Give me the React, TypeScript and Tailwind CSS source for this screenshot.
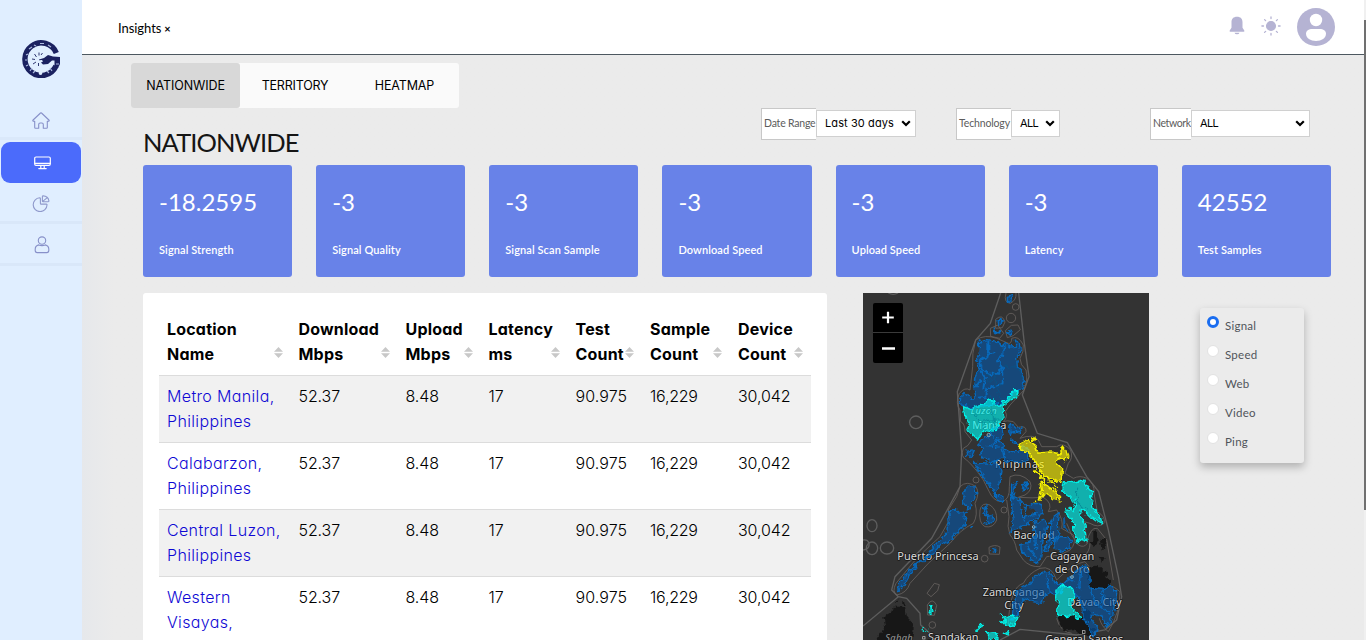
import React from "react";

const inter = "font-['Inter','Noto_Sans',sans-serif] [font-feature-settings:'cv11']";
const lato = "font-['Lato','Open_Sans',sans-serif]";

function Logo() {
  return (
    <svg width="38" height="38" viewBox="0 0 38 38">
      <path d="M34.300 13A16.300 16.300 0 1 0 34 26" fill="none" stroke="#1b2160" strokeWidth="5.400" />
      <path d="M32.500 20H38v4l-2 4-3.500-2z" fill="#1b2160" />
      <path
        d="M7 9l3-2M12 5l2 1M18 3.500h4M26 5l3 2M4 15l2-1M3 20h2M4 26l2-1M8 31l2-3M11 33l2-2M27 33l-2-2M30 31l-2-3M34 24h3"
        stroke="#aebbe0"
        strokeWidth="1.200"
      />
      <circle cx="18.500" cy="33" r="1.900" fill="#e0eeff" />
      <path d="M17 19.500l5-1.500 4-3 5 1.500 7 .5v3.500h-8l-4 3.500-5 .5-2-2 2-1-1-1.500-3 .3z" fill="#1b2160" />
      <path d="M14.500 17l-2-3M17 15.500v-3M13 19.500l-3-.5M14 22l-3 2M16.500 23v3M19 15l1.500-2" stroke="#1b2160" strokeWidth=".9" />
    </svg>
  );
}

function HomeIcon() {
  return (
    <svg width="18" height="17" viewBox="0 0 18 17" fill="none" stroke="#8790c9" strokeWidth="1.100" strokeLinejoin="round" strokeLinecap="round">
      <path d="M2.700 9.300H1.300q-.9-.6-.2-1.300L8.500 1q.5-.4 1 0l7.400 7q.7.700-.2 1.300h-1.400v6.100q0 .8-.8.800h-3.200v-3.700q0-1.500-1.500-1.500H8.200q-1.500 0-1.500 1.500v3.700H3.500q-.8 0-.8-.8z" />
    </svg>
  );
}

function MonitorIcon() {
  return (
    <svg width="17" height="14" viewBox="0 0 17 14" fill="none" stroke="#fff" strokeWidth="1.200" strokeLinecap="round">
      <rect x=".7" y="1" width="15.600" height="8.400" rx="1.300" />
      <path d="M1 7.400h15M6.800 9.600v2.600M10.200 9.600v2.600M4.800 12.600h7.400" />
    </svg>
  );
}

function PieIcon() {
  return (
    <svg width="18" height="17" viewBox="0 0 18 17" fill="none" stroke="#8f99cc" strokeWidth="1.100" strokeLinejoin="round">
      <path d="M7.700 2.800q.7 0 .7.700v4.900q0 .7.700.7h5.300q.7 0 .6.800A6.900 6.900 0 1 1 7.700 2.800z" />
      <path d="M11.100.9q-.7 0-.7.700v4.300q0 .8.800.8h5q.8 0 .7-.8A6 6 0 0 0 11.100.9zM10.700 6.400L15 2.900" />
    </svg>
  );
}

function UserIcon() {
  return (
    <svg width="16" height="18" viewBox="0 0 16 18" fill="none" stroke="#8790c9" strokeWidth="1.100">
      <circle cx="8" cy="4.600" r="3.700" />
      <path d="M4.800 8.900q3.200 1.400 6.400 0 3.600.9 3.600 4.300v1.400q0 2-2 2H3.200q-2 0-2-2v-1.400q0-3.400 3.600-4.300z" />
    </svg>
  );
}

function Sidebar() {
  return (
    <aside className="flex h-full w-[82px] shrink-0 flex-col items-center bg-[#e0eeff] pt-10">
      <Logo />
      <nav className="mt-[22px] flex w-full flex-col">
        <div className="flex h-[40px] items-center justify-center border-b-3 border-[#dae8fa] pt-[3px]"><HomeIcon /></div>
        <div className="mx-px mt-[2px] flex h-[41px] items-center justify-center rounded-[9px] bg-[#4b6bfb] pl-[2px]"><MonitorIcon /></div>
        <div className="flex h-[41px] items-center justify-center border-b-3 border-[#d9e7f9] pt-[3px]"><PieIcon /></div>
        <div className="flex h-[42px] items-center justify-center border-b-3 border-[#d9e7f9] pt-[3px] pl-px"><UserIcon /></div>
      </nav>
    </aside>
  );
}

function Header() {
  return (
    <header className="flex h-[55px] shrink-0 items-center justify-between border-b border-[#4d5860] bg-white pr-[29px] pl-9">
      <div className={`${lato} flex items-baseline gap-[3px] pt-[3px] text-[13px] tracking-[-0.050px] text-black`}>
        <span>Insights</span>
        <span className="text-[11px] font-bold">×</span>
      </div>
      <div className="flex items-center">
        <svg width="16" height="19" viewBox="0 0 16 19" fill="#b5b3d3" className="mb-[3px]">
          <path d="M8 .8c-3.700 0-5.500 2.200-5.500 5.500v5.500L.7 14.500q-.5 1.200.7 1.200h13.200q1.200 0 .7-1.200l-1.800-2.700V6.300C13.500 3 11.700.8 8 .8zM5.500 16.700h5Q10 18.300 8 18.300t-2.500-1.600z" />
        </svg>
        <svg width="20" height="20" viewBox="0 0 20 20" className="mb-[3px] ml-4" stroke="#b5b3d3" strokeWidth="1.300" strokeLinecap="round">
          <circle cx="10" cy="10" r="4.400" fill="#b5b3d3" />
          <path d="M10 .9v1.600M10 17.500v1.600M.9 10h1.600M17.500 10h1.600M3.600 3.600l1 1M15.400 15.400l1 1M3.600 16.400l1-1M15.400 4.600l1-1" />
        </svg>
        <svg width="38" height="38" viewBox="0 0 38 38" className="ml-4">
          <circle cx="19" cy="19" r="19" fill="#b5b3d3" />
          <circle cx="19" cy="12" r="6.200" fill="#fff" />
          <path d="M15.500 21h7c4 0 6.500 2 6.500 4.800C29 30 24.500 33 19 33S9 30 9 25.800C9 23 11.500 21 15.500 21z" fill="#fff" />
        </svg>
      </div>
    </header>
  );
}

function Tabs() {
  return (
    <div className={`${inter} flex h-[45px] w-[328px] rounded-[3px] bg-[#fafafa] pt-px text-[12.500px] text-black`}>
      <div className="-mt-px flex w-[109px] items-center justify-center rounded-[3px] bg-[#d8d8d8] pt-px tracking-[-0.1px]">NATIONWIDE</div>
      <div className="flex w-[110px] items-center justify-center tracking-[-0.2px]">TERRITORY</div>
      <div className="flex w-[109px] items-center justify-center tracking-[-0.15px]">HEATMAP</div>
    </div>
  );
}

function Chevron() {
  return (
    <svg width="10" height="7" viewBox="0 0 10 7" fill="none" stroke="#000" strokeWidth="2.200">
      <path d="M1.200 1.200L5 5l3.800-3.800" />
    </svg>
  );
}

type FilterProps = { label: string; value: string; labelClass: string; selectClass: string; valueClass: string };

function Filter({ label, value, labelClass, selectClass, valueClass }: FilterProps) {
  return (
    <div className="flex items-start">
      <div className={`${lato} flex h-8 items-center border border-r-0 border-[#c8c8c8] bg-white pl-[2px] text-[10.500px] whitespace-nowrap text-[#5c5c5c] ${labelClass}`}>
        {label}
      </div>
      <div className={`${inter} mt-[2px] flex h-[27px] items-center justify-between border border-[#d0d0d0] bg-white pr-[4px] pl-2 text-[11px] text-black ${selectClass}`}>
        <span className={`whitespace-nowrap ${valueClass}`}>{value}</span>
        <Chevron />
      </div>
    </div>
  );
}

const stats = [
  ["-18.2595", "Signal Strength"],
  ["-3", "Signal Quality"],
  ["-3", "Signal Scan Sample"],
  ["-3", "Download Speed"],
  ["-3", "Upload Speed"],
  ["-3", "Latency"],
  ["42552", "Test Samples"],
];

function Stats() {
  return (
    <div className={`${lato} grid w-[1188px] grid-cols-7 gap-6`}>
      {stats.map(([value, label]) => (
        <div key={label} className="flex h-28 flex-col rounded-[3px] bg-[#6882e8] pt-[21px] pl-4 text-white">
          <div className="text-[24px] leading-8">{value}</div>
          <div className="mt-[24px] text-[11px] leading-[15px] font-semibold tracking-[0.100px] whitespace-nowrap">{label}</div>
        </div>
      ))}
    </div>
  );
}

const columns = [
  ["Location", "Name"],
  ["Download", "Mbps"],
  ["Upload", "Mbps"],
  ["Latency", "ms"],
  ["Test", "Count"],
  ["Sample", "Count"],
  ["Device", "Count"],
];

const places = [
  ["Metro Manila,", "Philippines"],
  ["Calabarzon,", "Philippines"],
  ["Central Luzon,", "Philippines"],
  ["Western", "Visayas,"],
];

const rowGrid = "grid grid-cols-[131.500px_107px_83px_87px_74.500px_88px_81px]";

function LocationTable() {
  return (
    <div className={`${inter} h-[420px] w-[684px] shrink-0 rounded-[3px] bg-white px-4 pt-4 text-[16px] leading-[25px] text-black`}>
      <div className={`${rowGrid} h-[67px] border-b border-[#dcdcdc] pt-2`}>
        {columns.map(([top, bottom], i) => (
          <div key={i} className="flex items-end justify-between pr-[8px] pb-[8px] pl-2 font-bold whitespace-nowrap">
            <div className="w-0 tracking-[0.200px]">
              {top}
              <br />
              {bottom}
            </div>
            <svg width="9" height="11" viewBox="0 0 9 11" fill="#c8c8c8" className="mb-[9px]">
              <path d="M0 4.800L4.500 0 9 4.800zM0 6.200L4.500 11 9 6.200z" />
            </svg>
          </div>
        ))}
      </div>
      {places.map(([top, bottom], i) => (
        <div key={top} className={`${rowGrid} h-[67px] border-b border-[#dcdcdc] pt-2 font-light tracking-[-0.100px] ${i % 2 === 0 ? "bg-[#f1f1f1]" : "bg-white"}`}>
          <div className="pl-2 tracking-[0.350px] whitespace-nowrap text-[#0f08d4]">
            {top}
            <br />
            {bottom}
          </div>
          <div className="pl-2">52.37</div>
          <div className="pl-2">8.48</div>
          <div className="pl-2">17</div>
          <div className="pl-2 tracking-[0.100px]">90.975</div>
          <div className="pl-2 tracking-[-0.250px]">16,229</div>
          <div className="pl-2">30,042</div>
        </div>
      ))}
    </div>
  );
}

function MapLabels() {
  return (
    <g
      fontFamily="Noto Sans, sans-serif"
      fontSize="33"
      fill="#dadada"
      stroke="#181818"
      strokeWidth="5"
      strokeLinejoin="round"
      paintOrder="stroke"
    >
      <text x="332" y="373" fontSize="28" fontStyle="italic" textLength="78">Luzon</text>
      <text x="337" y="417" textLength="102">Manila</text>
      <text x="405" y="534" textLength="148">Pilipinas</text>
      <text x="460" y="747" textLength="124">Bacolod</text>
      <text x="112" y="810" textLength="244">Puerto Princesa</text>
      <text x="570" y="810" textLength="133">Cagayan</text>
      <text x="584" y="850" textLength="105">de Oro</text>
      <text x="368" y="918" textLength="186">Zamboanga</text>
      <text x="433" y="957" textLength="58">City</text>
      <text x="622" y="948" textLength="163">Davao City</text>
      <text x="204" y="1054" textLength="152">Sandakan</text>
      <text x="556" y="1060" textLength="234">General Santos</text>
      <text x="76" y="1052" fontSize="28" fontStyle="italic" fill="#999" textLength="82">Sabah</text>
    </g>
  );
}

function MapDrawing() {
  return (
    <svg width="286" height="347" viewBox="9 9 858 1041" className="block">
      <defs>
        <filter id="coast" x="-5%" y="-5%" width="110%" height="110%" colorInterpolationFilters="sRGB">
          <feTurbulence type="fractalNoise" baseFrequency="0.07" numOctaves="2" seed="4" result="n" />
          <feDisplacementMap in="SourceGraphic" in2="n" scale="20" xChannelSelector="R" yChannelSelector="G" />
        </filter>
      </defs>
      <rect x="9" y="9" width="858" height="1041" fill="#333333" />
      <g fill="none" stroke="#5e5e5e" strokeWidth="4">
        <path d="M422 9L391 100 347 150 292 305 305 486 300 590 215 745 105 860 95 900 115 920 9 1008" />
        <path d="M476 9L493 160 507 260 487 315 532 430 622 458 680 560 716 605 745 720 775 860 785 920 770 990 735 1020 650 1035 480 1018 420 1050" />
        <path d="M115 920L140 925 180 970 182 1005 210 1030" />
        <circle cx="168" cy="397" r="19" />
        <ellipse cx="36" cy="707" rx="15" ry="18" />
        <ellipse cx="36" cy="775" rx="17" ry="19" />
        <ellipse cx="81" cy="774" rx="20" ry="18" />
        <path d="M9 750q16-3 18 12t-18 18M85 9q15 8 29 0" />
      </g>
      <g fill="none" stroke="#66625f" strokeWidth="2.500" strokeLinejoin="round">
        <circle cx="467" cy="51" r="10" />
        <circle cx="453" cy="84" r="14" />
        <path d="M438 9Q430 38 451 40 470 30 468 9M407 88q20-18 28 8l-8 17-20 2zM391 115l22-10 18 25-12 15-27-6zM436 122l18-16 20-1 7 14-21 18-18 6z" />
        <path d="M347 150Q375 132 410 145L445 160Q455 162 455 145 475 135 490 165 492 185 480 205 480 225 498 240 505 270 492 300L450 345 436 365Q445 380 430 395 440 390 460 395L475 412Q500 405 498 425L480 445Q520 430 535 450L545 470 590 470Q610 455 632 480 640 505 625 520L615 550 640 565Q660 555 680 565 705 580 702 610L712 665Q738 680 732 700 715 715 690 700L672 695 682 760Q672 775 655 765L635 735 620 700" />
        <path d="M347 150Q335 190 338 230L330 300Q315 290 298 310 285 340 300 360L302 395Q315 400 315 425L335 450Q325 470 310 475 300 500 320 510L335 525Q350 540 370 570L385 600Q400 635 425 635 450 630 448 590L450 560Q480 545 510 575 520 600 495 615L475 622Q520 625 550 622 580 640 565 665L590 660Q612 690 605 715L640 735Q650 760 630 780L600 795 560 800 540 830Q510 832 490 810L470 780Q465 750 450 735 440 710 447 680L440 630" />
        <path d="M300 590Q320 570 348 590 360 610 345 640 355 675 340 700 300 720 270 760L205 820 150 880Q140 910 110 915 95 905 108 880L170 805 240 740 268 690 265 660 290 620z" />
        <path d="M360 660Q365 635 390 645 412 660 410 690 400 715 375 710 355 700 360 660zM387 772q18-10 33-1l-2 22-30-1z" />
        <circle cx="374" cy="806" r="10" />
        <circle cx="348" cy="570" r="9" />
        <circle cx="432" cy="660" r="9" />
        <path d="M201 910l22-30 15 4-5 18-20 18zM202 945q15-25 28 1l-7 30-20-1z" />
        <circle cx="217" cy="1005" r="10" />
        <path d="M445 1000Q450 890 490 880 505 850 540 835 575 825 590 870 640 820 675 815 700 840 700 885 750 875 780 905 780 970 745 1025 725 1010 718 985M680 760Q690 710 712 715L740 750 760 870M590 985q10 40 45 45M670 800q20-15 20-40" />
      </g>
      <g filter="url(#coast)">
        <path
          d="M40 1060L75 1010 70 980 95 965 103 950 135 950 141 980 162 1005 155 1060zM108 935l5-6 5 7zM130 932l8 8-8 4zM690 760l10-8 0-28 8-3 5 30-8 20zM722 750l12 0 4 18-10 14zM680 835l32-10 20 20 8 0 4 20 14 30-68-2zM715 800l8 20 8-18zM590 980l70 0 16-25 14 18-4 30 18 18-12 15-30 0-20-18-30 5z"
          fill="#171717"
        />
      </g>
      <MapLabels />
      <g filter="url(#coast)">
        <g fill="#0059b2" fillOpacity=".56" stroke="#0869ba" strokeWidth="4" strokeLinejoin="round">
          <path d="M358 153L376 148 400 152 432 163 454 171 468 168 463 150 478 158 482 185 470 205 472 230 490 248 493 268 488 292 470 303 440 325 420 345 400 345 378 350 350 352 335 356 322 348 303 345 301 325 312 307 322 318 340 328 348 322 341 290 345 262 356 240 348 215 358 190z" />
          <path d="M385 152l0 44-28 21 6 20 24 14 28 0 9-21-13-20 18-14 3-24-20-18M385 196l18-8M424 230l6 22-3 30-48 13-4 26-18 2M361 242l14 20-5 34M361 272l-15 20" fill="none" strokeWidth="6" />
          <path d="M387 251l-5 27 25-20M405 251l2 45M430 228l43 4 18 34M427 282l-15 18 8 22 30 8M376 325l32-4" fill="none" stroke="#0b5285" strokeWidth="3" />
          <path d="M449 18l9-5-2 12-14 10 0-8zM414 92l12-2-2 12-8 3zM403 111l3 14 13 4 0 3-16-3zM441 130l12-10 3 5-8 11z" />
          <path d="M365 450l18-8 18-30 24-1 5 25-15 15 17 16 2 35-29 14-35-9-8-18 8-14-14-10zM390 418l14 28M378 466l38 5M399 466l15-23M450 403l14 2 10 10 12-1-8 15-20-5-6 12-3-13zM450 445l16 11 8 11-16-7zM318 487l25-6-8 18-15-2zM425 470l27 16 20-6 20-12 18 14-6 25-18 15-30-11-20 8z" />
          <path d="M340 517L380 519 414 523 426 543 420 578 408 605 392 595 375 565 355 540z" />
          <path d="M405 605l10 13 17 5-2 14-22-8zM455 582l15-6-6 17-6 30-4-10zM485 582l14-3 2 15-10 6zM488 580q10 12 4 20" />
          <path d="M318 592L345 590 348 620 335 638 330 660 312 642 308 618z" />
          <path d="M322 660L312 675 322 703 300 715 272 750 238 768 210 800 175 822 152 850 130 890 112 905 120 880 140 850 172 820 200 798 225 765 262 725 268 700 265 675 285 655 300 670zM340 705l-8 8" />
          <path d="M368 665l10-18 6 16-4 20zM382 682l16-7 5 12-18 16zM370 700l12 4M391 777l9 6 9-3" />
          <path d="M455 622L480 630 500 645 530 640 550 645 545 670 525 690 500 700 480 715 450 725 460 690 455 650zM480 630l5 50 45-10M500 645l-8 50" />
          <path d="M523 700L550 688 562 700 556 730 545 755 546 795 530 820 508 805 485 785 482 765 510 755 525 735zM525 705l5 75M500 765l30 40" />
          <path d="M598 668L595 700 597 735 578 750 560 785 550 782 572 740 572 700 580 680zM585 745L606 739 634 748 630 772 602 785 582 775zM612 680l0 30 12 15" />
          <path d="M456 990L462 930 474 900 500 885 520 880 518 860 550 848 570 842 585 880 610 885 625 870 640 850 660 832 680 828 690 860 690 892 730 895 755 890 770 905 768 935 758 975 740 1010 730 985 705 970 690 985 712 1010 705 1040 695 1040 690 1010 668 985 670 950 655 920 640 900 620 886 590 915 570 905 555 915 550 940 520 935 490 925 478 950 472 975z" />
          <path d="M560 853l8 52M626 875l14-5M662 840l-6 55M690 895l16 45 45 30M730 895l-6 60" fill="none" />
        </g>
        <g fill="#00f5f0" fillOpacity=".65" stroke="#00f0e6" strokeWidth="4" strokeLinejoin="round">
          <path d="M310 350L332 358 342 350 374 344 382 327 400 330 405 348 430 344 430 366 436 380 415 402 408 425 373 418 360 440 352 447 337 432 320 420 328 405 314 378z" />
          <path d="M430 346l-2-9 20-17 12-18 14 0-5 21-20 8z" />
          <path d="M610 575L640 578 670 570 680 590 695 605 695 635 700 655 725 685 728 702 705 690 685 675 665 655 660 675 675 705 678 755 665 748 655 755 642 730 640 695 620 675 618 655 640 662 648 640 630 620 605 600z" />
          <path d="M588 900L613 885 637 895 647 917 632 935 640 965 660 975 655 988 640 976 620 980 592 978 596 942 587 927z" />
          <path d="M208 960l2-14 10 16-8 9zM418 975l14 6 22-5 20 6-5 12-17 13-18-3-10-11 16 0zM348 1018l14-15 8 0-8 12-14 12zM380 1028l20-3 18 12-12 12-18-4zM430 1030l18-8-5 12zM188 1015l15 9" />
        </g>
        <path d="M650 590v48l35 20M345 370l10 25 60-8M395 353l8 52M380 388l-10 30" stroke="#078d9a" strokeWidth="3" fill="none" />
        <g fill="#fff600" fillOpacity=".62" stroke="#f4f000" strokeWidth="4.500" strokeLinejoin="round">
          <path d="M480 462L502 452 528 470 534 490 570 486 604 492 602 474 620 476 626 500 610 512 595 505 590 520 608 537 602 580 580 568 555 560 538 540 528 515 505 490 482 474zM515 444l10-3-6 12z" />
          <path d="M540 575L560 588 590 605 600 630 580 625 555 610 538 630 544 600z" />
          <path d="M520 538l24 22 26 38M565 568l28 26M523 636l5-3" />
        </g>
      </g>
      <g fill="none" stroke="#8aaebb" strokeWidth="3">
        <circle cx="386" cy="435" r="5" />
        <circle cx="521" cy="711" r="4" />
        <circle cx="636" cy="861" r="4" />
      </g>
      <rect x="188" y="1040" width="7" height="7" fill="none" stroke="#ccc" strokeWidth="2" />
      <rect x="667" y="1022" width="8" height="8" fill="none" stroke="#ccc" strokeWidth="2" />
    </svg>
  );
}

function MapPanel() {
  return (
    <div className="relative h-[347px] w-[286px] shrink-0 overflow-hidden">
      <MapDrawing />
      <div className="absolute top-[10px] left-[10px] flex w-[30px] flex-col overflow-hidden rounded-[2px] bg-black">
        {["M9 15h12M15 9v12", "M9 15.500h13"].map((d, i) => (
          <svg key={d} width="30" height="30" viewBox="0 0 30 30" stroke="#fff" strokeWidth="2.300" className={i === 0 ? "border-b border-[#3a3a3a]" : ""}>
            <path d={d} />
          </svg>
        ))}
      </div>
    </div>
  );
}

function LayerPicker() {
  return (
    <div className={`${lato} mt-[15px] flex h-[155px] w-[104px] flex-col rounded-[3px] bg-[#ebebeb] pt-[3px] pl-[7px] text-[11.500px] text-[#50545a] shadow-[0_4px_8px_rgba(0,0,0,0.25)]`}>
      {["Signal", "Speed", "Web", "Video", "Ping"].map((name, i) => (
        <div key={name} className="flex h-[29px] items-center gap-[6px]">
          <span className={`mb-[7px] box-border size-3 rounded-full bg-white ${i === 0 ? "border-[3.500px] border-[#1a6df0]" : "border border-[#e2e2e2]"}`} />
          <span className="tracking-[0.250px]">{name}</span>
        </div>
      ))}
    </div>
  );
}

export default function App() {
  return (
    <div className="flex h-[640px] w-[1366px] overflow-hidden bg-[#ebebeb]">
      <Sidebar />
      <div className="flex min-w-0 flex-1 flex-col">
        <Header />
        <main className="flex-1 bg-linear-to-r from-[#e6e8eb] to-[#ebebeb] to-[32px] pt-2 pl-[49px]">
          <Tabs />
          <div className="ml-3 flex h-[57px] w-[1188px]">
            <h1 className={`${lato} w-[618px] pt-[16px] text-[25.500px] leading-[36px] tracking-[-0.900px] text-[#151515]`}>NATIONWIDE</h1>
            <Filter label="Date Range" value="Last 30 days" labelClass="w-[55px] tracking-[-0.200px]" selectClass="w-[100px]" valueClass="tracking-[0.100px]" />
            <div className="w-10" />
            <Filter label="Technology" value="ALL" labelClass="w-[55px] tracking-[-0.150px]" selectClass="w-[49px]" valueClass="tracking-[-0.600px]" />
            <div className="w-[90px]" />
            <Filter label="Network" value="ALL" labelClass="w-[41px] tracking-[-0.400px]" selectClass="w-[119px]" valueClass="tracking-[-0.600px]" />
          </div>
          <div className="ml-3">
            <Stats />
            <div className="mt-4 flex h-[347px] items-start overflow-hidden">
              <LocationTable />
              <div className="ml-9">
                <MapPanel />
              </div>
              <div className="ml-[51px]">
                <LayerPicker />
              </div>
            </div>
          </div>
        </main>
      </div>
      <div className="flex h-full w-[2px] shrink-0 flex-col bg-[#f0f0f0] pt-5">
        <div className="h-[490px] bg-[#707070]" />
      </div>
    </div>
  );
}
